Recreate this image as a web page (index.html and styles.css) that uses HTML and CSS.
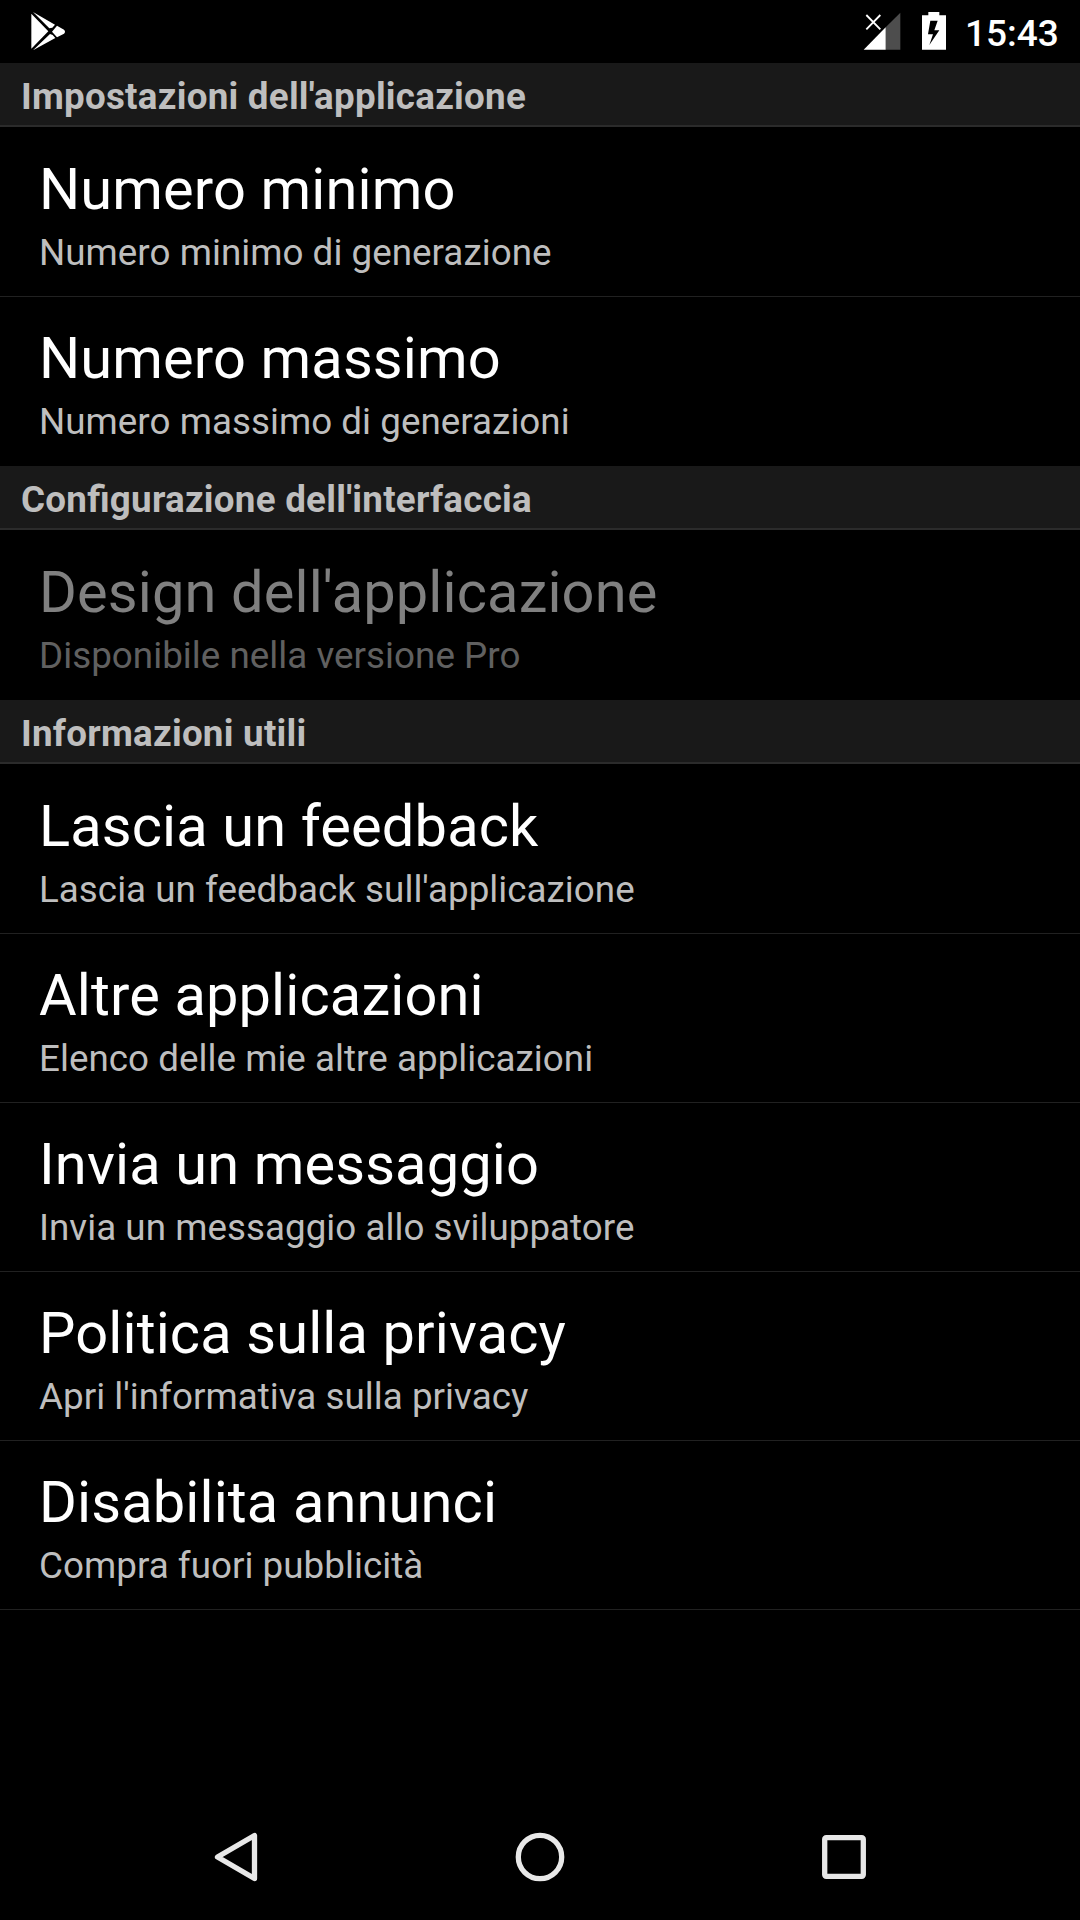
FILE: index.html
```html
<!DOCTYPE html>
<html lang="it">
<head>
<meta charset="utf-8">
<title>Impostazioni</title>
<link rel="stylesheet" href="styles.css">
</head>
<body>
<header class="status">
  <svg class="play" width="42" height="46" viewBox="0 0 126 138"><path fill="#fff" d="M10 17L61 70 10 122ZM15 12L81 50 73 59 64 61ZM15 127L82 90 74 81 66 78ZM87 53L108 65Q114 71 108 77L87 88 72 71Z"/></svg>
  <div class="indicators">
    <svg class="signal" width="46" height="46" viewBox="0 0 138 138"><path fill="#4d4d4d" d="M121 14V125H77V58Z"/><path fill="#fff" d="M77 58V125H11Z"/><path stroke="#fff" stroke-width="5.5" d="M19 21L61 64M61 21L19 64"/></svg>
    <svg class="battery" width="36" height="46" viewBox="0 0 108 138"><path fill="#fff" fill-rule="evenodd" d="M37 12H70V22H90V125H18V22H37ZM43 38L36 79H51L40 111L70 67H55L65 38Z"/></svg>
    <span class="clock">15:43</span>
  </div>
</header>
<main class="settings">
  <h2 class="category">Impostazioni dell'applicazione</h2>
  <div class="item first"><div class="title">Numero minimo</div><div class="summary">Numero minimo di generazione</div></div>
  <div class="item last"><div class="title">Numero massimo</div><div class="summary">Numero massimo di generazioni</div></div>
  <h2 class="category">Configurazione dell'interfaccia</h2>
  <div class="item first last disabled"><div class="title">Design dell'applicazione</div><div class="summary">Disponibile nella versione Pro</div></div>
  <h2 class="category">Informazioni utili</h2>
  <div class="item first"><div class="title">Lascia un feedback</div><div class="summary">Lascia un feedback sull'applicazione</div></div>
  <div class="item"><div class="title">Altre applicazioni</div><div class="summary">Elenco delle mie altre applicazioni</div></div>
  <div class="item"><div class="title">Invia un messaggio</div><div class="summary">Invia un messaggio allo sviluppatore</div></div>
  <div class="item"><div class="title">Politica sulla privacy</div><div class="summary">Apri l'informativa sulla privacy</div></div>
  <div class="item"><div class="title">Disabilita annunci</div><div class="summary">Compra fuori pubblicità</div></div>
</main>
<nav class="navbar">
  <svg width="100" height="100" viewBox="0 0 100 100"><path d="M64.5 25.5V68.5L27.5 47Z"/></svg>
  <svg width="100" height="100" viewBox="0 0 100 100"><circle cx="50" cy="47" r="21.7"/></svg>
  <svg width="100" height="100" viewBox="0 0 100 100"><rect x="34.7" y="27.7" width="38.6" height="38.6" rx="1.5"/></svg>
</nav>
</body>
</html>
```
FILE: styles.css
```css
* { box-sizing: border-box; }
body {
  margin: 0;
  width: 1080px;
  height: 1920px;
  display: flex;
  flex-direction: column;
  overflow: hidden;
  background: #000;
  color: #fff;
  font-family: Roboto, sans-serif;
}
.status {
  height: 63px;
  display: flex;
  justify-content: space-between;
  padding: 8px 21px 0 28px;
}
.indicators { display: flex; }
.battery { margin-left: 10px; }
.clock {
  width: 94px;
  margin-left: 13px;
  font-size: 37px;
  line-height: 51px;
  font-weight: 500;
  white-space: nowrap;
}
.settings { flex: 1; }
.category {
  margin: 0;
  height: 64px;
  padding: 0 21px;
  font-size: 36.75px;
  line-height: 68px;
  font-weight: 700;
  letter-spacing: 0.25px;
  font-feature-settings: "liga" 1;
  color: #bebebe;
  background: #191919;
  border-bottom: 2px solid #2b2b2b;
}
.item {
  height: 169px;
  padding: 23px 39px 0;
  border-bottom: 1px solid #212121;
}
.first { height: 170px; padding-top: 24px; }
.last { border-bottom-color: transparent; }
.title { font-size: 57.75px; line-height: 77px; letter-spacing: 0.14px; }
.summary { font-size: 36.75px; line-height: 49px; letter-spacing: 0.04px; color: #bebebe; }
.disabled .title { color: #808080; }
.disabled .summary { color: #606060; }
.navbar {
  height: 110px;
  display: flex;
  justify-content: space-between;
  padding: 0 190px;
}
.navbar svg { fill: none; stroke: #e8e8e8; stroke-width: 5.3; stroke-linejoin: round; }
```
